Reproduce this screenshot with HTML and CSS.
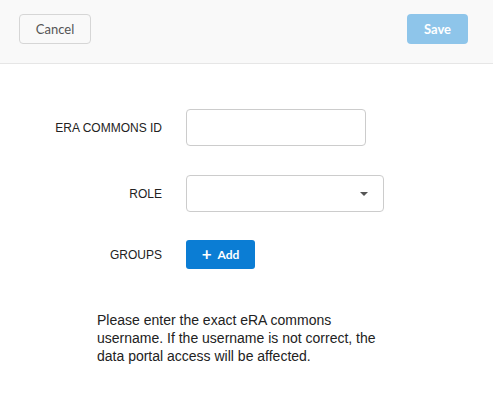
FILE: index.html
```html
<!DOCTYPE html>
<html>
<head>
<meta charset="utf-8">
<link rel="stylesheet" href="styles.css">
</head>
<body>
<div class="header">
  <button class="btn btn-cancel">Cancel</button>
  <button class="btn btn-save">Save</button>
</div>
<div class="form">
  <div class="row row-id">
    <label class="label">ERA COMMONS ID</label>
    <div class="input"></div>
  </div>
  <div class="row row-role">
    <label class="label">ROLE</label>
    <div class="select"><span class="caret"></span></div>
  </div>
  <div class="row row-groups">
    <label class="label">GROUPS</label>
    <button class="btn btn-add"><span class="plus">+</span>Add</button>
  </div>
  <p class="note">Please enter the exact eRA commons username. If the username is not correct, the data portal access will be affected.</p>
</div>
</body>
</html>
```
FILE: styles.css
```css
html, body { margin: 0; padding: 0; background: #fff; }
body { font-family: "Liberation Sans", Arial, sans-serif; color: #222; width: 493px; height: 414px; overflow: hidden; }
.header {
  height: 64px;
  background: #f9f9f9;
  border-bottom: 1px solid #e6e6e6;
  display: flex;
  justify-content: space-between;
  align-items: flex-start;
  padding: 14px 25px 0 19px;
  box-sizing: border-box;
}
.btn { font-family: Lato, "Liberation Sans", sans-serif; cursor: pointer; box-sizing: border-box; }
.btn-cancel {
  width: 72px; height: 30px;
  background: #f9f9f9;
  border: 1px solid #d6d6d6;
  border-radius: 4px;
  color: #555;
  font-size: 13px;
  padding: 0;
}
.btn-save {
  width: 61px; height: 30px;
  background: #8ec5ea;
  border: none;
  border-radius: 4px;
  color: #fff;
  font-weight: bold;
  font-size: 13px;
  padding: 0;
}
.form { padding-top: 45px; }
.row { display: flex; align-items: center; }
.label {
  text-align: right;
  font-size: 12px;
  color: #222;
  padding-right: 24px;
  box-sizing: border-box;
  flex: none;
  width: 186px;
}
.input {
  width: 180px; height: 37px;
  border: 1px solid #ccc;
  border-radius: 4px;
  box-sizing: border-box;
}
.row-role { margin-top: 29px; }
.select {
  width: 198px; height: 37px;
  border: 1px solid #ccc;
  border-radius: 4px;
  box-sizing: border-box;
  display: flex;
  align-items: center;
  justify-content: flex-end;
  padding-right: 15px;
}
.caret {
  width: 0; height: 0;
  border-left: 4px solid transparent;
  border-right: 4px solid transparent;
  border-top: 4px solid #555;
}
.row-groups { margin-top: 28px; }
.btn-add {
  width: 69px; height: 29px;
  background: #0b7dd4;
  border: none;
  border-radius: 3px;
  color: #fff;
  font-weight: bold;
  font-size: 12px;
  padding: 0;
  display: flex;
  align-items: center;
  justify-content: center;
}
.plus { font-size: 17px; font-weight: bold; margin-right: 6px; line-height: 1; margin-top: -2px; }
.note {
  margin: 42px 0 0 97px;
  width: 288px;
  font-size: 14px;
  line-height: 18px;
  color: #222;
}
```
